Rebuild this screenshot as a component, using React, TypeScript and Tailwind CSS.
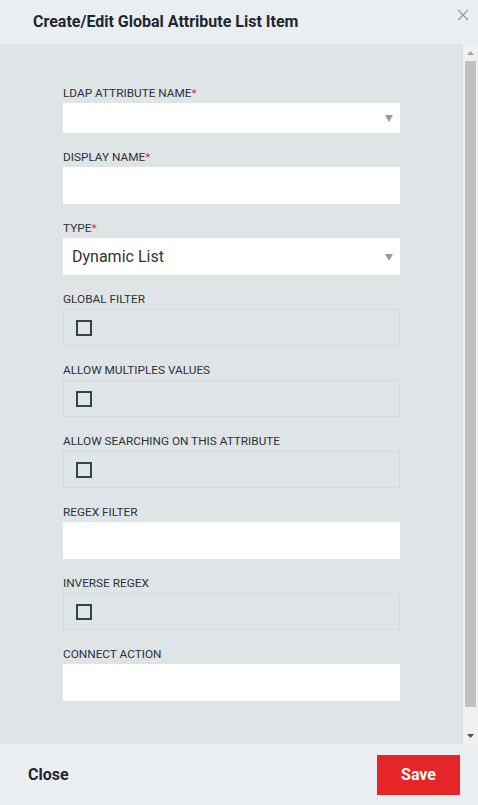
import type { ReactNode } from "react";

function FieldLabel({ children, required }: { children: ReactNode; required?: boolean }) {
  return (
    <div className="mb-[3px] h-[14px] text-[11.8px] leading-[14px] text-[#2b3238] uppercase">
      {children}
      {required && <span className="text-[#e52528]">*</span>}
    </div>
  );
}

function SelectBox({ value, height }: { value?: string; height: string }) {
  return (
    <div className={`flex ${height} items-center justify-between bg-white pl-[9px] pr-[7px]`}>
      <span className="text-[16px] text-[#333]">{value}</span>
      <svg width="8" height="7" viewBox="0 0 8 7" className="mt-[1px]">
        <path d="M0 0H8L4 7Z" fill="#9a9a9a" />
      </svg>
    </div>
  );
}

function TextBox() {
  return <div className="h-[37px] bg-white" />;
}

function CheckBox() {
  return (
    <div className="flex h-[37px] items-center border border-[#d3d9dc] pl-[12px]">
      <div className="h-[16px] w-[16px] border-2 border-[#36434b]" />
    </div>
  );
}

export default function App() {
  return (
    <div
      className="flex h-[805px] w-[478px] flex-col overflow-hidden"
      style={{ fontFamily: "Roboto, 'Liberation Sans', sans-serif" }}
    >
      <div className="flex h-[44px] shrink-0 items-center justify-between bg-[#eaeef1] pl-[33px] pr-[9px]">
        <h2 className="text-[16px] font-bold text-[#1d2730]">Create/Edit Global Attribute List Item</h2>
        <svg width="12" height="12" viewBox="0 0 12 12" className="mb-[14px]">
          <path d="M1 1L11 11M11 1L1 11" stroke="#999" strokeWidth="1.3" />
        </svg>
      </div>

      <div className="flex h-[700px] bg-[#dfe4e7]">
        <div className="flex-1 px-[63px] pt-[42px]">
          <div className="flex flex-col gap-[17px]">
            <div>
              <FieldLabel required>LDAP Attribute Name</FieldLabel>
              <SelectBox height="h-[30px]" />
            </div>
            <div>
              <FieldLabel required>Display Name</FieldLabel>
              <TextBox />
            </div>
            <div>
              <FieldLabel required>Type</FieldLabel>
              <SelectBox value="Dynamic List" height="h-[37px]" />
            </div>
            <div>
              <FieldLabel>Global Filter</FieldLabel>
              <CheckBox />
            </div>
            <div>
              <FieldLabel>Allow Multiples Values</FieldLabel>
              <CheckBox />
            </div>
            <div>
              <FieldLabel>Allow Searching on this Attribute</FieldLabel>
              <CheckBox />
            </div>
            <div>
              <FieldLabel>Regex Filter</FieldLabel>
              <TextBox />
            </div>
            <div>
              <FieldLabel>Inverse Regex</FieldLabel>
              <CheckBox />
            </div>
            <div>
              <FieldLabel>Connect Action</FieldLabel>
              <TextBox />
            </div>
          </div>
        </div>

        {/* scrollbar */}
        <div className="flex w-[15px] flex-col bg-[#f1f1f1]">
          <div className="flex h-[17px] items-center justify-center">
            <svg width="7" height="4" viewBox="0 0 7 4">
              <path d="M0 4H7L3.5 0Z" fill="#a3a3a3" />
            </svg>
          </div>
          <div className="mx-[2px] h-[646px] bg-[#c1c1c1]" />
          <div className="flex-1" />
          <div className="flex h-[17px] items-center justify-center">
            <svg width="7" height="4" viewBox="0 0 7 4">
              <path d="M0 0H7L3.5 4Z" fill="#505050" />
            </svg>
          </div>
        </div>
      </div>

      <div className="flex h-[61px] shrink-0 items-center justify-between bg-[#eaeef1] pl-[28px] pr-[18px]">
        <button className="text-[16px] font-bold text-[#1d2730]">Close</button>
        <button className="h-[40px] w-[83px] bg-[#e52528] text-[16px] font-bold text-white">Save</button>
      </div>
    </div>
  );
}
